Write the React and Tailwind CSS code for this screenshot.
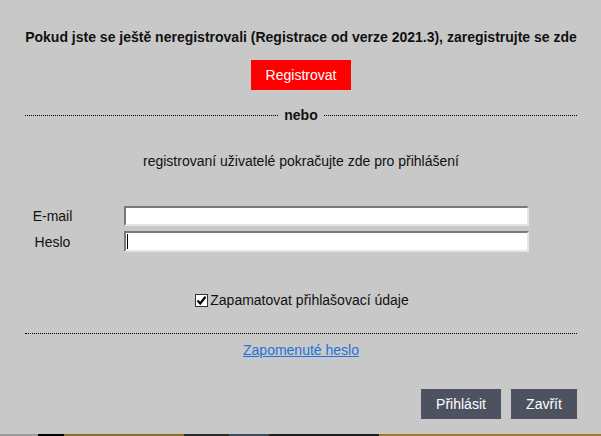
import { useState } from "react";

// jednoduchý dialog přihlášení / registrace
function App() {
  const [remember, setRemember] = useState(true);

  return (
    <div
      className="w-[601px] h-[436px] bg-[#c8c8c8] flex flex-col text-[14px] text-[#111] overflow-hidden"
      style={{ fontFamily: '"Liberation Sans", Arial, sans-serif' }}
    >
      <div className="flex-1 flex flex-col px-[25px] pr-[24px]">
        {/* registrace */}
        <p className="mt-[29px] h-[16px] leading-[16px] font-bold text-center whitespace-nowrap">
          Pokud jste se ještě neregistrovali (Registrace od verze 2021.3), zaregistrujte se zde
        </p>
        <div className="flex justify-center mt-[15px]">
          <button className="w-[100px] h-[30px] bg-[#ff0000] text-white text-[14px]">
            Registrovat
          </button>
        </div>

        {/* oddělovač nebo */}
        <div className="flex items-center mt-[17px] h-[16px]">
          <div className="flex-1 border-t border-dotted border-black" />
          <span className="px-[6px] font-bold leading-[16px]">nebo</span>
          <div className="flex-1 border-t border-dotted border-black" />
        </div>

        <p className="mt-[30px] h-[16px] leading-[16px] text-center">
          registrovaní uživatelé pokračujte zde pro přihlášení
        </p>

        {/* formulář */}
        <div className="mt-[37px] grid grid-cols-[55px_405px] gap-x-[44px] gap-y-[5px] items-center">
          <label className="text-center leading-[16px]">E-mail</label>
          <input
            type="text"
            className="h-[20px] bg-white border-2 border-t-[#7a7a7a] border-l-[#7a7a7a] border-b-[#e6e6e6] border-r-[#e6e6e6] outline-none px-[2px]"
          />
          <label className="text-center leading-[16px]">Heslo</label>
          <div className="relative h-[21px]">
            <input
              type="password"
              className="w-full h-full bg-white border-2 border-t-[#7a7a7a] border-l-[#7a7a7a] border-b-[#e6e6e6] border-r-[#e6e6e6] outline-none px-[2px]"
            />
            <span className="absolute left-[3px] top-[3px] w-px h-[15px] bg-black" />
          </div>
        </div>

        {/* zapamatovat */}
        <div className="mt-[40px] flex justify-center items-center h-[16px] pl-[2px]">
          <button
            onClick={() => setRemember(!remember)}
            className="w-[13px] h-[13px] bg-white border border-[#333] flex items-center justify-center mr-[2px]"
          >
            {remember && (
              <svg width="11" height="11" viewBox="0 0 11 11">
                <path d="M1.5 5.5 L4.2 8.5 L9.5 1.8" fill="none" stroke="#000" strokeWidth="2.2" />
              </svg>
            )}
          </button>
          <span className="leading-[16px]">Zapamatovat přihlašovací údaje</span>
        </div>

        <div className="mt-[25px] border-t border-dotted border-black" />

        <div className="mt-[8px] flex justify-center">
          <a href="#" className="text-[#2372d9] underline leading-[16px]">
            Zapomenuté heslo
          </a>
        </div>

        {/* tlačítka */}
        <div className="mt-[31px] flex justify-end gap-[10px]">
          <button className="w-[80px] h-[30px] bg-[#4d5261] text-white text-[14px]">
            Přihlásit
          </button>
          <button className="w-[66px] h-[30px] bg-[#4d5261] text-white text-[14px]">
            Zavřít
          </button>
        </div>
      </div>

      {/* kus pozadí pod dialogem */}
      <div className="h-[2px] flex">
        <div className="w-[38px] bg-[#9a9a9a]" />
        <div className="w-[26px] bg-black" />
        <div className="w-[120px] bg-[#8a6d1e]" />
        <div className="w-[45px] bg-[#2a2a2a]" />
        <div className="w-[40px] bg-[#3b4a5a]" />
        <div className="w-[110px] bg-[#1e1e1e]" />
        <div className="flex-1 bg-[#9c7a28]" />
      </div>
    </div>
  );
}

export default App;
